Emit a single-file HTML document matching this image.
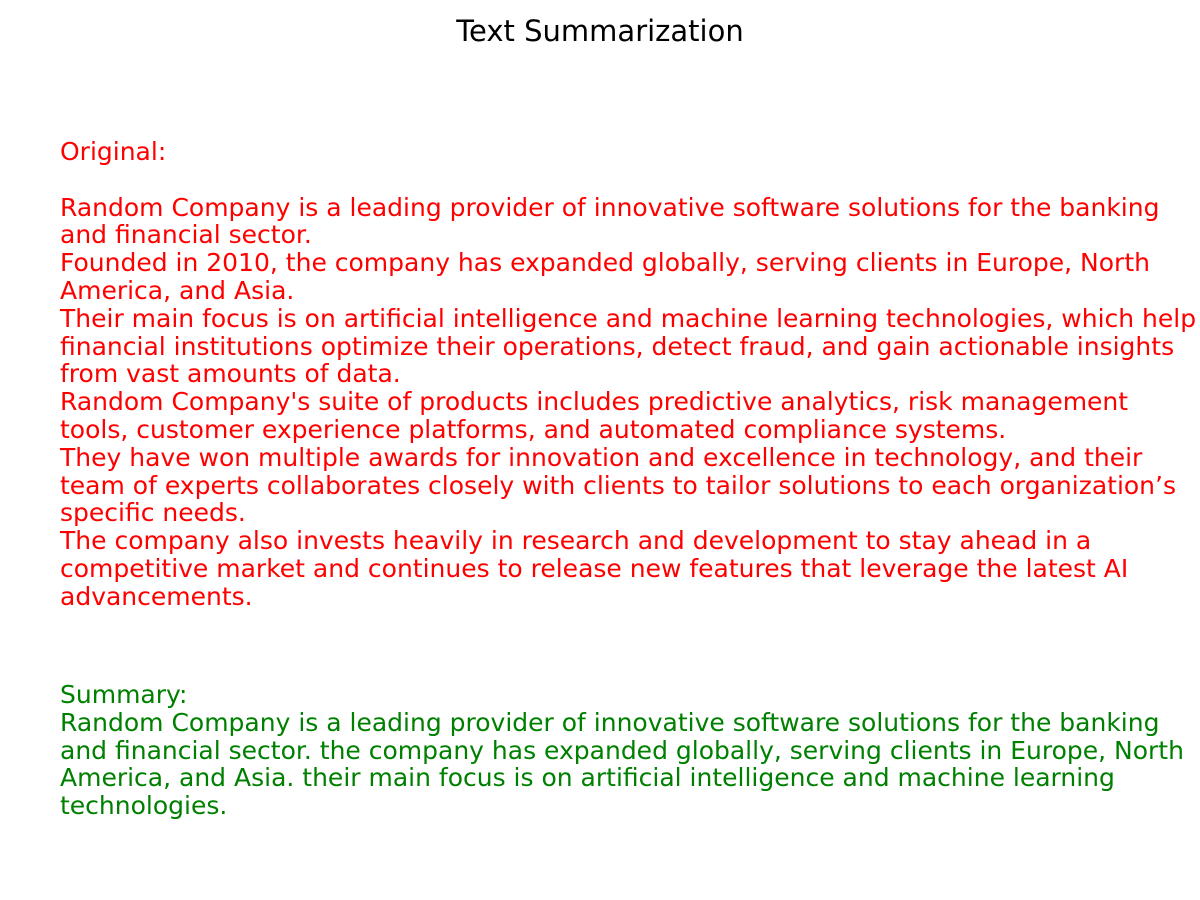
<!DOCTYPE html>
<html><head><meta charset="utf-8"><style>
html,body{margin:0;padding:0;width:1200px;height:900px;overflow:hidden;background:#fff;}
body{position:relative;font-family:"DejaVu Sans","Liberation Sans",sans-serif;}
.t{position:absolute;left:0;width:1200px;top:14px;text-align:center;font-size:29px;line-height:34px;color:#000;}
pre{position:absolute;left:60px;margin:0;font-family:"DejaVu Sans","Liberation Sans",sans-serif;font-size:25px;line-height:27.8px;white-space:pre;}
.o{top:138px;color:#ff0000;}
.s{top:681px;color:#008000;}
</style></head><body>
<div class="t">Text Summarization</div>
<pre class="o">Original:

Random Company is a leading provider of innovative software solutions for the banking
and financial sector.
Founded in 2010, the company has expanded globally, serving clients in Europe, North
America, and Asia.
Their main focus is on artificial intelligence and machine learning technologies, which help
financial institutions optimize their operations, detect fraud, and gain actionable insights
from vast amounts of data.
Random Company's suite of products includes predictive analytics, risk management
tools, customer experience platforms, and automated compliance systems.
They have won multiple awards for innovation and excellence in technology, and their
team of experts collaborates closely with clients to tailor solutions to each organization’s
specific needs.
The company also invests heavily in research and development to stay ahead in a
competitive market and continues to release new features that leverage the latest AI
advancements.</pre>
<pre class="s">Summary:
Random Company is a leading provider of innovative software solutions for the banking
and financial sector. the company has expanded globally, serving clients in Europe, North
America, and Asia. their main focus is on artificial intelligence and machine learning
technologies.</pre>
</body></html>
